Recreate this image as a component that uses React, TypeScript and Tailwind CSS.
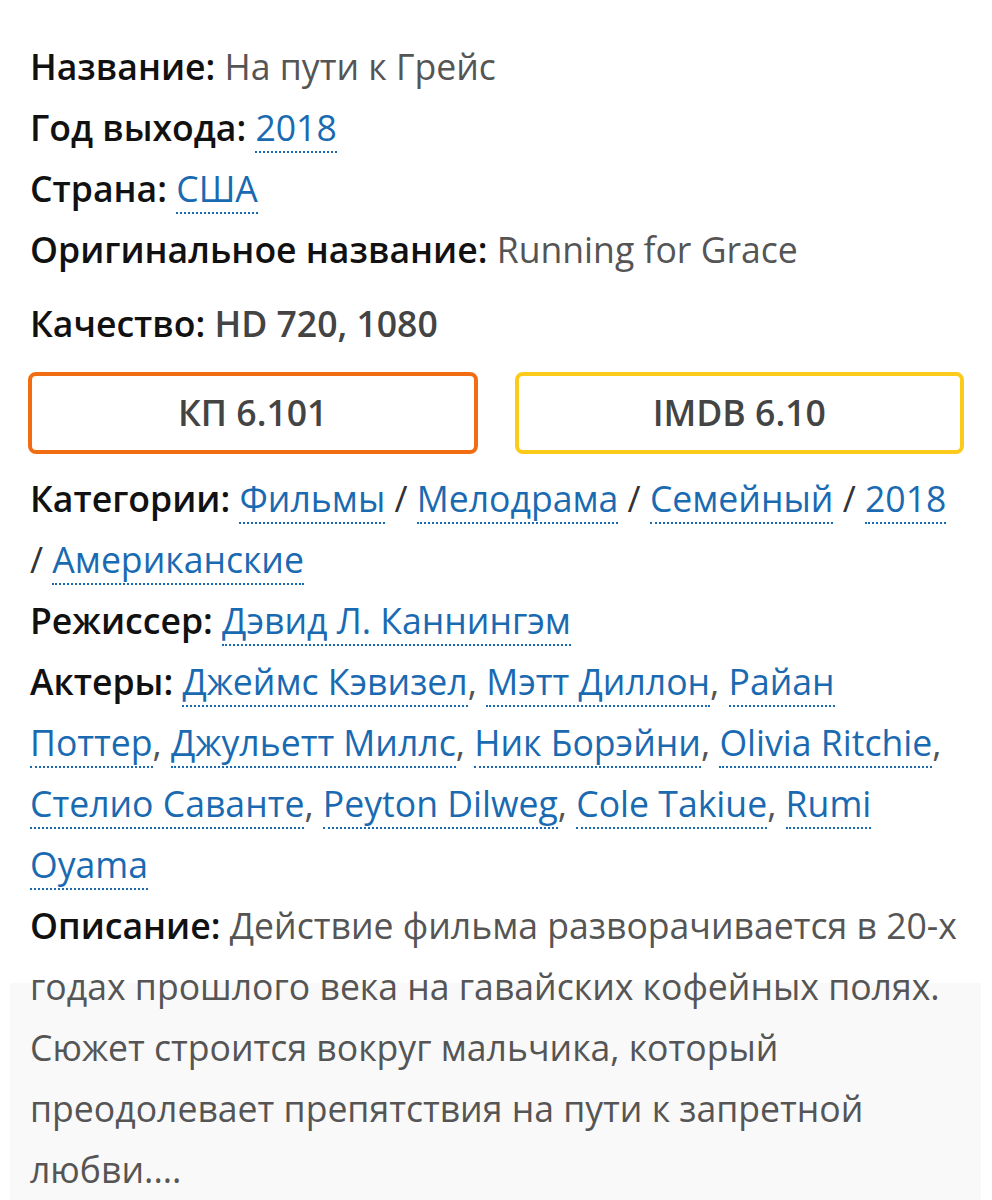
const link = 'text-[#1a6ab2] border-b-2 border-dotted border-[#1a6ab2]';

function A({ children }: { children: React.ReactNode }) {
  return <span className={link}>{children}</span>;
}

function Row({ label, children, className = '' }: { label: string; children: React.ReactNode; className?: string }) {
  return (
    <div className={`leading-[61px] ${className}`}>
      <span className="font-semibold text-[#111]">{label}</span> {children}
    </div>
  );
}

export default function App() {
  const actors = [
    'Джеймс Кэвизел',
    'Мэтт Диллон',
    'Райан Поттер',
    'Джульетт Миллс',
    'Ник Борэйни',
    'Olivia Ritchie',
    'Стелио Саванте',
    'Peyton Dilweg',
    'Cole Takiue',
    'Rumi Oyama',
  ];
  const cats = ['Фильмы', 'Мелодрама', 'Семейный', '2018', 'Американские'];

  return (
    <div className="relative min-h-[1200px] bg-white overflow-hidden">
      {/* faint grey panel behind the lower part of the description */}
      <div className="absolute left-[10px] right-[11px] top-[983px] bottom-0 bg-[#f9f9f9]" />

      <div
        className="relative pl-[30px] pr-[28px] pt-[36px] text-[35.6px] text-[#555]"
        style={{ fontFamily: '"Open Sans", sans-serif' }}
      >
        <Row label="Название:">На пути к Грейс</Row>
        <Row label="Год выхода:">
          <A>2018</A>
        </Row>
        <Row label="Страна:">
          <A>США</A>
        </Row>
        <Row label="Оригинальное название:">Running for Grace</Row>
        <Row label="Качество:" className="mt-[13px]">
          <span className="font-semibold text-[#444]">HD 720, 1080</span>
        </Row>

        <div className="grid grid-cols-2 gap-[37px] mt-[18px] mb-[14px] -ml-[2px]">
          <div className="h-[82px] rounded-[8px] border-[4px] border-[#f26d12] flex items-center justify-center font-semibold text-[#444]">
            КП 6.101
          </div>
          <div className="h-[82px] rounded-[8px] border-[4px] border-[#fcca1b] flex items-center justify-center font-semibold text-[#444]">
            IMDB 6.10
          </div>
        </div>

        <Row label="Категории:">
          {cats.map((c, i) => (
            <span key={c}>
              {i > 0 && <span className="text-[#333]"> / </span>}
              <A>{c}</A>
            </span>
          ))}
        </Row>
        <Row label="Режиссер:">
          <A>Дэвид Л. Каннингэм</A>
        </Row>
        <Row label="Актеры:">
          {actors.map((a, i) => (
            <span key={a}>
              <A>{a}</A>
              {i < actors.length - 1 && ', '}
            </span>
          ))}
        </Row>
        <Row label="Описание:">
          Действие фильма разворачивается в 20-х годах прошлого века на гавайских кофейных полях. Сюжет строится
          вокруг мальчика, который преодолевает препятствия на пути к запретной любви....
        </Row>
      </div>
    </div>
  );
}
